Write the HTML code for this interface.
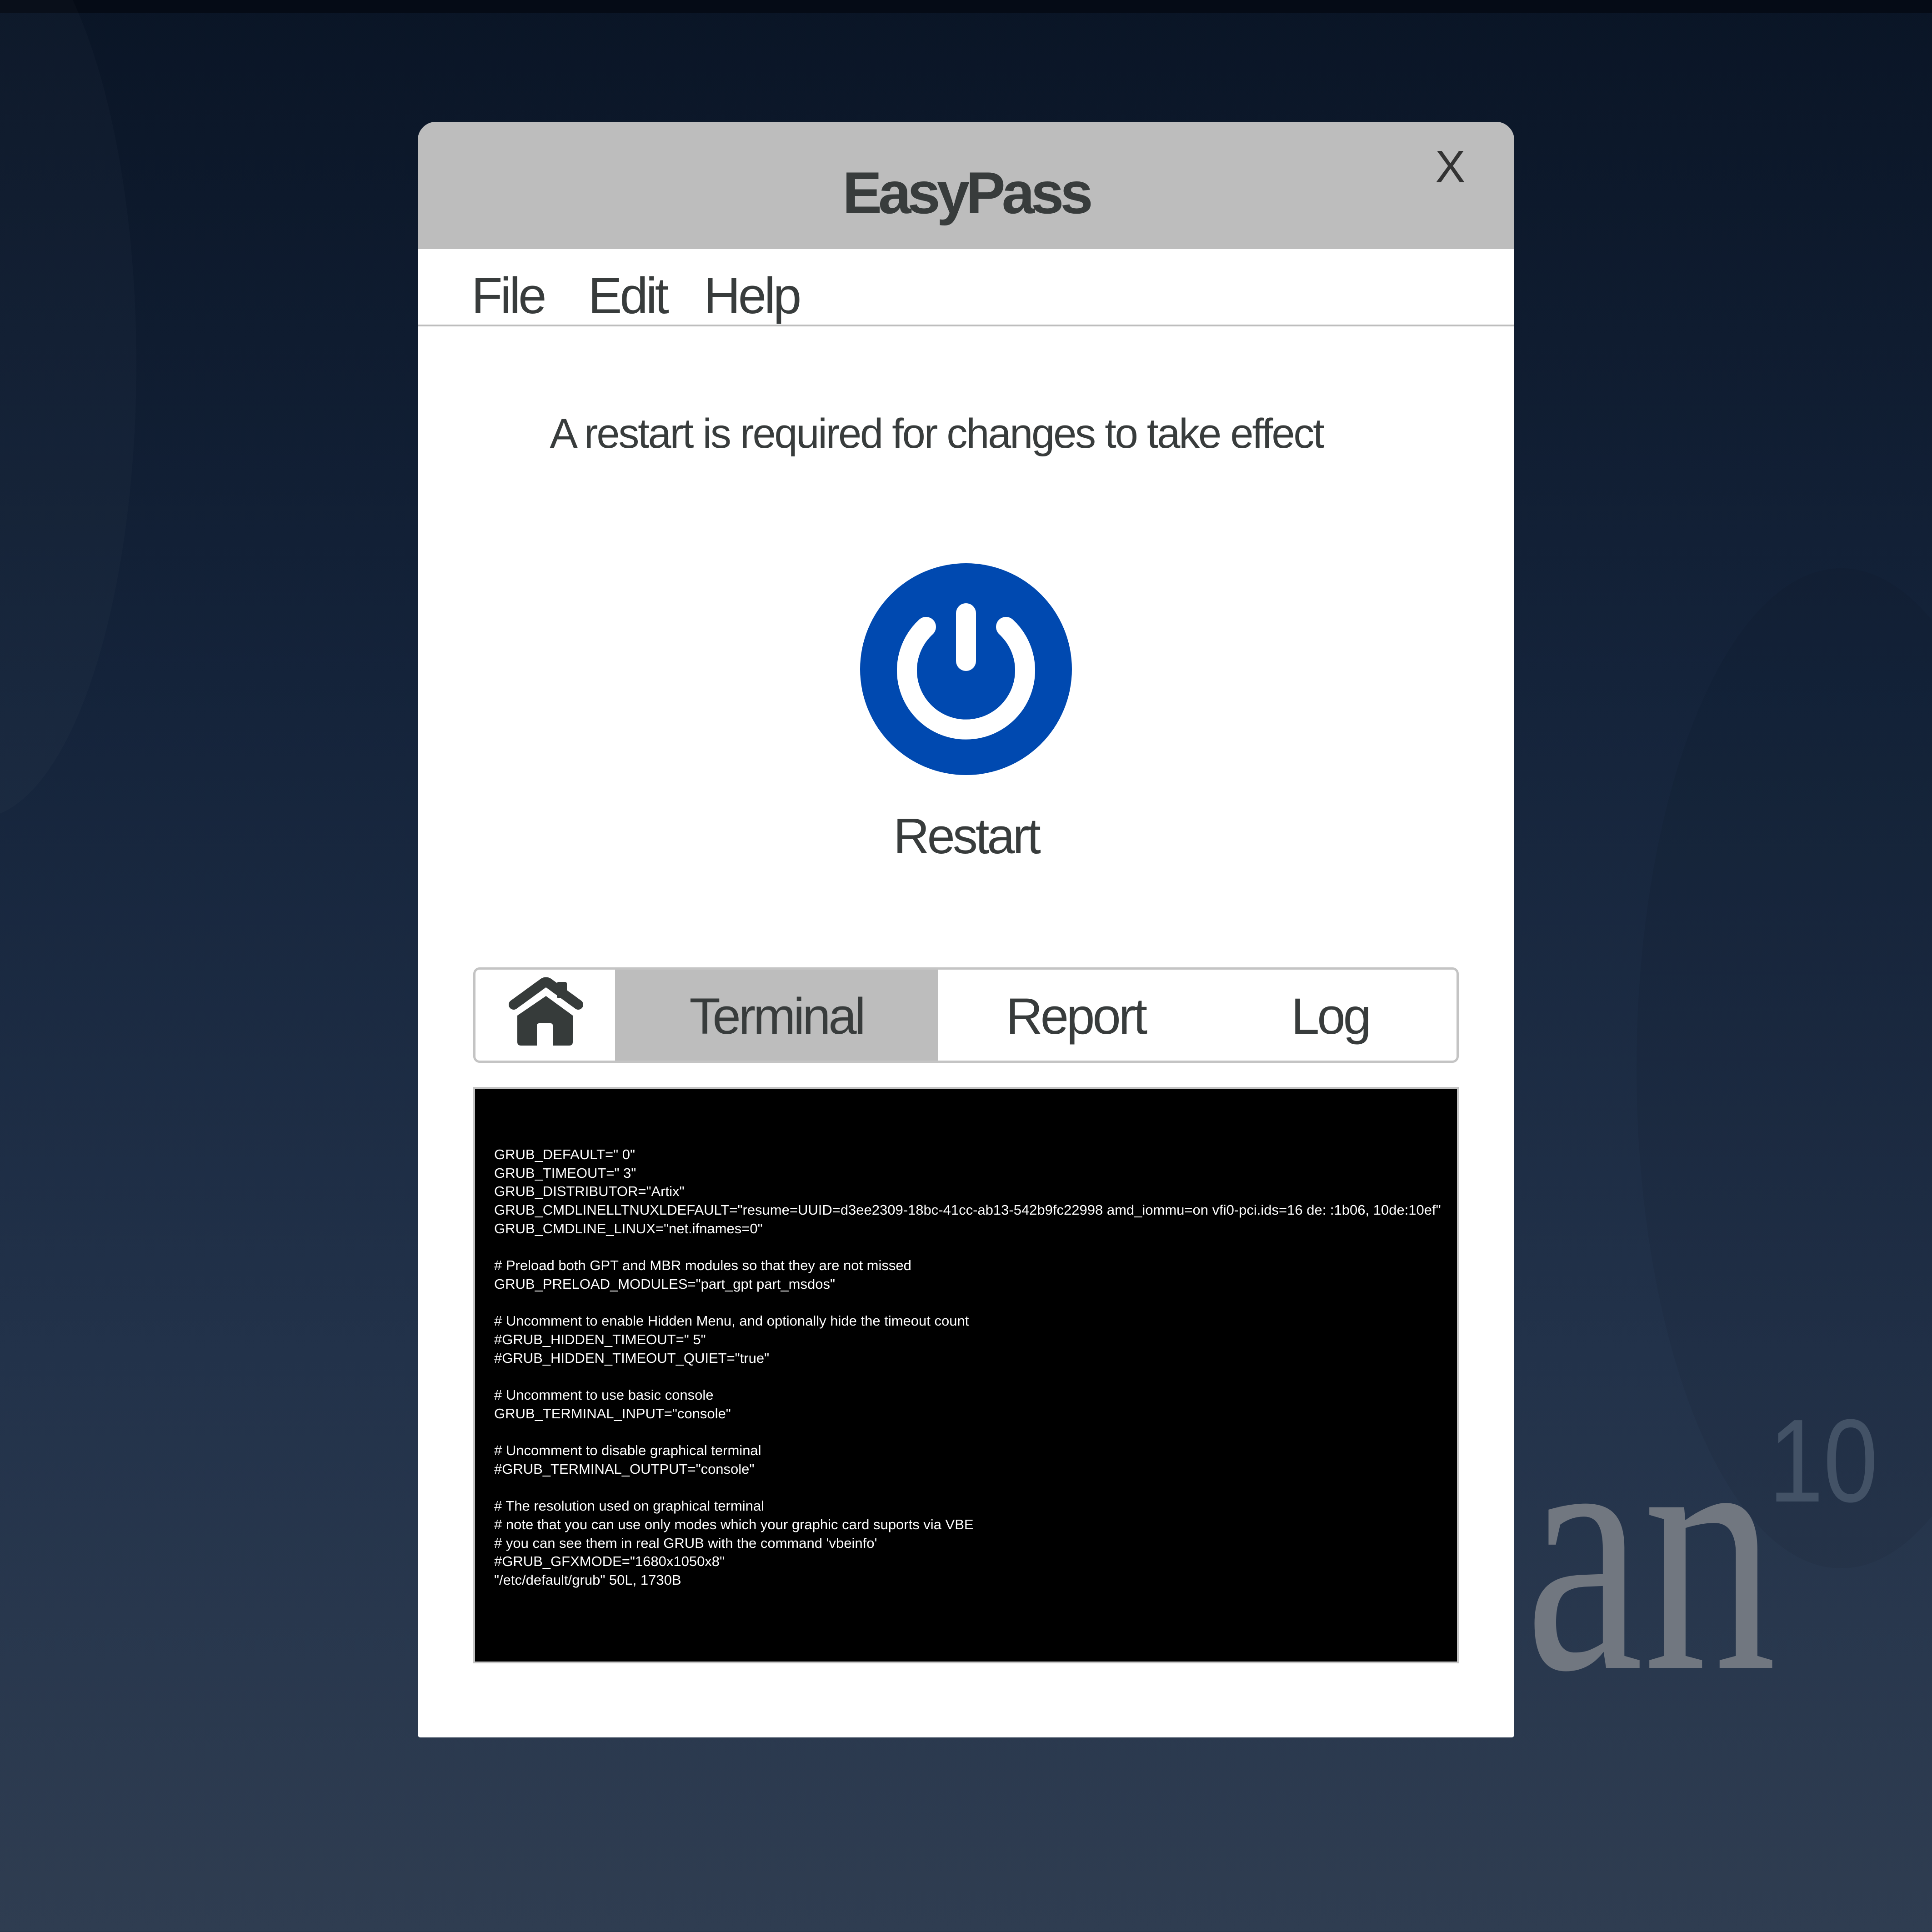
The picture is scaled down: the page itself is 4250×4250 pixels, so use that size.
<!DOCTYPE html>
<html><head><meta charset="utf-8"><style>
*{margin:0;padding:0;box-sizing:border-box}
body{width:4250px;height:4250px;overflow:hidden;position:relative;font-family:"Liberation Sans",sans-serif;
background:linear-gradient(180deg,#0a1526 0%,#14233a 35%,#22324a 70%,#2f3d51 100%)}
.a{position:absolute}
.t{white-space:pre;color:#fff;font-size:31px;line-height:40.7px;transform-origin:0 0}
</style></head><body>
<div class="a" style="left:0;top:0;width:4250px;height:28px;background:#050b16"></div>
<div class="a" style="left:-400px;top:-200px;width:700px;height:2000px;border-radius:50%;background:rgba(255,255,255,0.02)"></div>
<div class="a" style="left:3600px;top:1250px;width:900px;height:2200px;border-radius:50%;background:rgba(0,0,0,0.05)"></div>
<div class="a" style="left:3355px;top:3025px;font-family:'Liberation Serif',serif;font-size:770px;line-height:1;color:#717780;transform:scaleX(0.76);transform-origin:0 0">an</div>
<div class="a" style="left:3891px;top:3084px;font-family:'Liberation Sans',sans-serif;font-size:260px;line-height:1;color:#435266;transform:scaleX(0.83);transform-origin:0 0">10</div>

<div class="a" style="left:919px;top:268px;width:2412px;height:3554px;background:#fff;border-radius:40px 40px 6px 6px;overflow:hidden">
 <div class="a" style="left:0;top:0;width:100%;height:280px;background:#bdbdbd"></div>
 <div class="a" style="left:0;top:72px;width:100%;text-align:center;font-size:130px;font-weight:bold;color:#383c3c;letter-spacing:-8px;line-height:1.3">EasyPass</div>
 <div class="a" style="left:2238px;top:42px;font-size:100px;color:#333">X</div>
 <div class="a" style="left:118px;top:318px;font-size:112px;color:#383c3c;letter-spacing:-5px;word-spacing:22px">File&nbsp; Edit<span style="margin-left:33px">&nbsp;Help</span></div>
 <div class="a" style="left:0;top:446px;width:100%;height:4px;background:#bdbdbd"></div>
 <div class="a" style="left:0;top:634px;width:100%;text-align:center;font-size:92px;color:#383c3c;letter-spacing:-3.2px;padding-right:130px">A restart is required for changes to take effect</div>
 <svg class="a" style="left:973px;top:971px" width="466" height="466" viewBox="0 0 466 466">
  <circle cx="233" cy="233" r="233" fill="#0049b0"/>
  <path d="M145 140 A130 130 0 1 0 321 140" fill="none" stroke="#fff" stroke-width="44" stroke-linecap="round"/>
  <line x1="233" y1="110" x2="233" y2="215" stroke="#fff" stroke-width="44" stroke-linecap="round"/>
 </svg>
 <div class="a" style="left:0;top:1508px;width:100%;text-align:center;font-size:110px;color:#383c3c;letter-spacing:-5px">Restart</div>
 <div class="a" style="left:122px;top:1860px;width:2168px;height:210px;border:5px solid #c4c4c4;border-radius:14px;overflow:hidden">
  <div class="a" style="left:307px;top:0;width:710px;height:100%;background:#bdbdbd"></div>
  <svg class="a" style="left:-5px;top:-5px" width="312" height="210" viewBox="1041 2128 312 210">
   <path d="M1130 2210 L1196 2162 Q1201 2159 1206 2162 L1272 2210" fill="none" stroke="#363b3a" stroke-width="22" stroke-linecap="round" stroke-linejoin="round"/>
   <rect x="1225" y="2160" width="22" height="36" rx="4" fill="#363b3a"/>
   <path d="M1138 2234 L1201 2191 L1260 2234 L1260 2292 Q1260 2300 1252 2300 L1216 2300 L1216 2256 Q1216 2251 1211 2251 L1186 2251 Q1181 2251 1181 2256 L1181 2300 L1146 2300 Q1138 2300 1138 2292 Z" fill="#363b3a"/>
  </svg>
  <div class="a" style="left:307px;top:38px;width:710px;text-align:center;font-size:112px;color:#383c3c;letter-spacing:-5px">Terminal</div>
  <div class="a" style="left:1095px;top:38px;width:450px;text-align:center;font-size:112px;color:#383c3c;letter-spacing:-5px">Report</div>
  <div class="a" style="left:1680px;top:38px;width:400px;text-align:center;font-size:112px;color:#383c3c;letter-spacing:-5px">Log</div>
 </div>
 <div class="a" style="left:122px;top:2123px;width:2168px;height:1268px;background:#000;border:4px solid #c4c4c4">
  <div class="a t" style="left:42px;top:125px">GRUB_DEFAULT=" 0"
GRUB_TIMEOUT=" 3"
GRUB_DISTRIBUTOR="Artix"
GRUB_CMDLINELLTNUXLDEFAULT="resume=UUID=d3ee2309-18bc-41cc-ab13-542b9fc22998 amd_iommu=on vfi0-pci.ids=16 de: :1b06, 10de:10ef"
GRUB_CMDLINE_LINUX="net.ifnames=0"

# Preload both GPT and MBR modules so that they are not missed
GRUB_PRELOAD_MODULES="part_gpt part_msdos"

# Uncomment to enable Hidden Menu, and optionally hide the timeout count
#GRUB_HIDDEN_TIMEOUT=" 5"
#GRUB_HIDDEN_TIMEOUT_QUIET="true"

# Uncomment to use basic console
GRUB_TERMINAL_INPUT="console"

# Uncomment to disable graphical terminal
#GRUB_TERMINAL_OUTPUT="console"

# The resolution used on graphical terminal
# note that you can use only modes which your graphic card suports via VBE
# you can see them in real GRUB with the command 'vbeinfo'
#GRUB_GFXMODE="1680x1050x8"
"/etc/default/grub" 50L, 1730B</div>
 </div>
</div>
</body></html>
